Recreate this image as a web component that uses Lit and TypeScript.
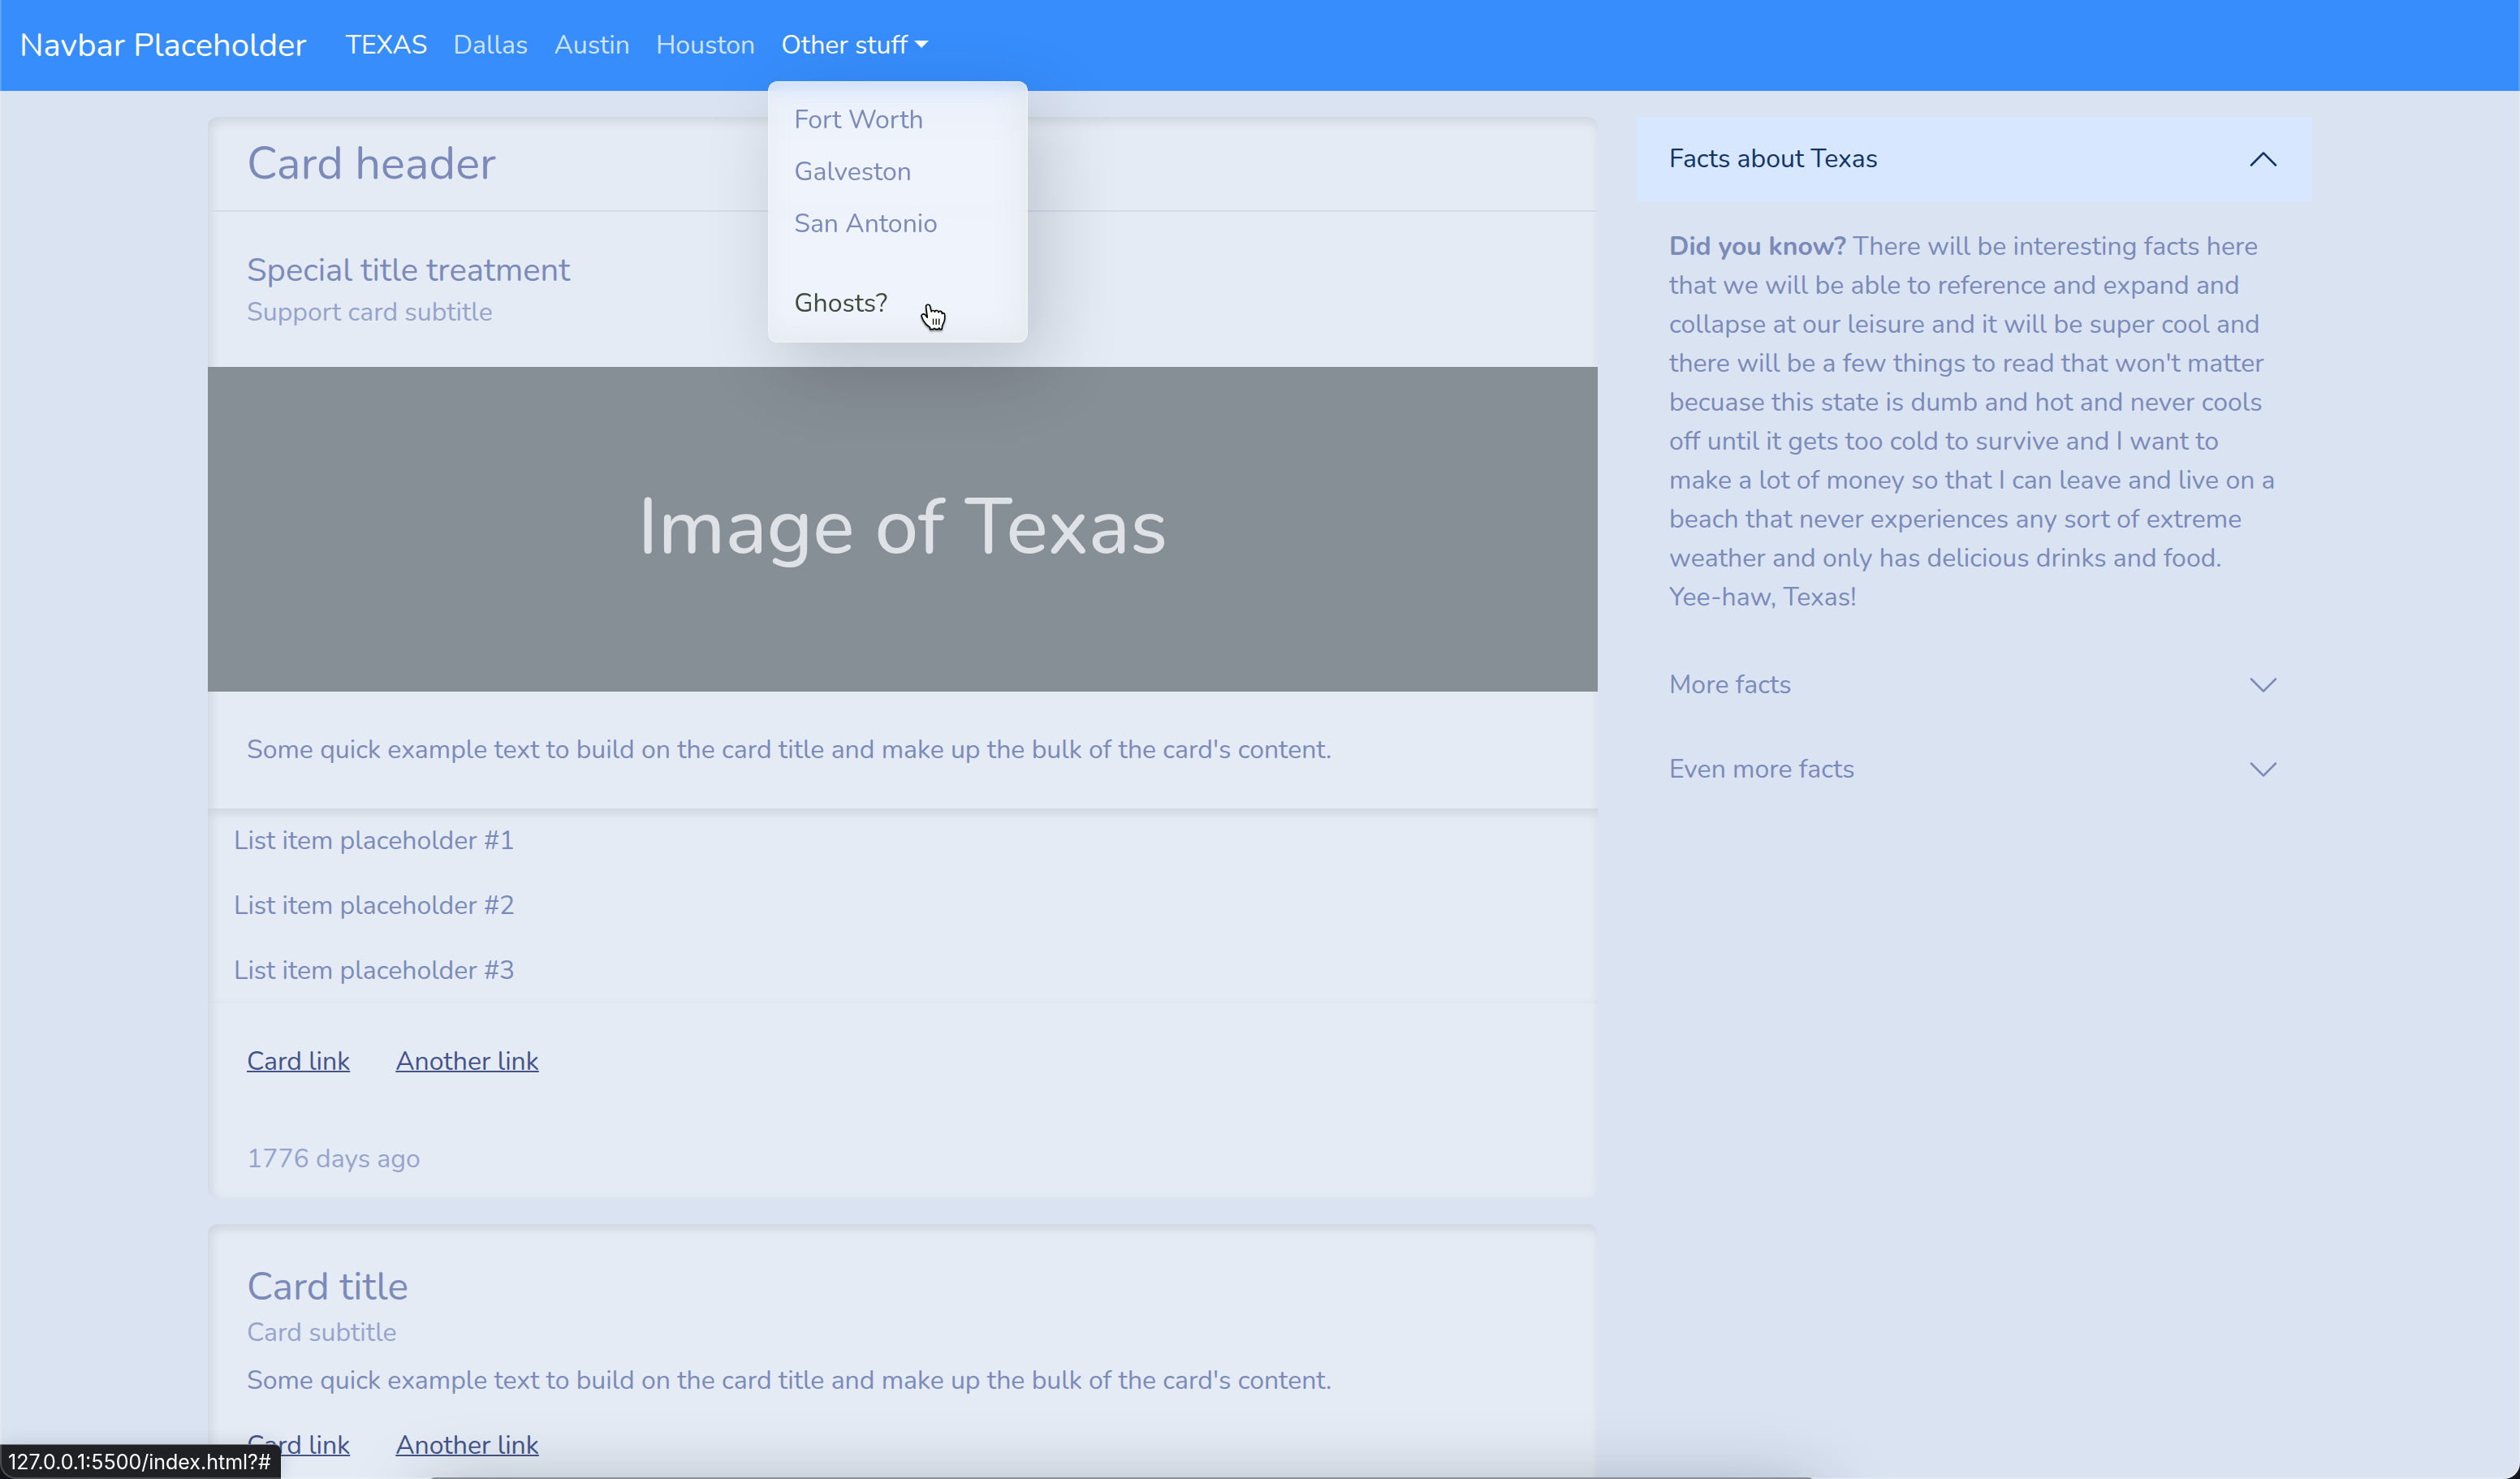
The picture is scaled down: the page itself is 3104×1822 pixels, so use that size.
import { LitElement, html, svg, css } from "lit";
import { customElement, state } from "lit/decorators.js";
import { classMap } from "lit/directives/class-map.js";

const EXAMPLE =
  "Some quick example text to build on the card title and make up the bulk of the card's content.";

@customElement("site-navbar")
export class SiteNavbar extends LitElement {
  static styles = css`
    :host {
      display: block;
      flex: none;
      position: relative;
      z-index: 10;
    }
    .bar {
      display: flex;
      align-items: center;
      gap: 32px;
      padding: 16px 24px;
      background: #378dfc;
    }
    .brand {
      color: #fff;
      font-size: 40px;
      line-height: 60px;
      text-decoration: none;
      white-space: nowrap;
    }
    .links {
      display: flex;
      margin: 0;
      padding: 0;
      list-style: none;
    }
    .item {
      position: relative;
    }
    .link {
      display: flex;
      align-items: center;
      gap: 8px;
      padding: 16px;
      border: 0;
      background: none;
      color: #cfe3ff;
      font: inherit;
      line-height: 48px;
      text-decoration: none;
      white-space: nowrap;
      cursor: pointer;
    }
    .strong {
      color: #fff;
    }
    .caret {
      width: 18px;
      height: 9px;
      margin-bottom: 4px;
      fill: currentColor;
    }
    .menu {
      position: absolute;
      top: calc(100% + 4px);
      left: 0;
      box-sizing: border-box;
      min-width: 320px;
      margin: 0;
      padding: 16px 0;
      list-style: none;
      border-radius: 12px;
      background: rgba(239, 244, 252, 0.83);
      backdrop-filter: blur(10px);
      box-shadow:
        18px 32px 96px rgba(0, 0, 0, 0.17),
        inset 0 0 2px 1px rgba(255, 255, 255, 0.4),
        inset -8px -8px 36px rgba(190, 190, 170, 0.18);
    }
    .option {
      display: block;
      padding: 8px 32px;
      color: #7b8ab8;
      line-height: 48px;
      text-decoration: none;
      white-space: nowrap;
    }
    .hovered {
      color: #404a3d;
    }
    .divider {
      height: 2px;
      margin: 16px 0;
    }
    .pointer {
      position: absolute;
      top: 273px;
      left: 187px;
      width: 33px;
      height: 37px;
      filter: drop-shadow(0 2px 1px rgba(0, 0, 0, 0.4));
      pointer-events: none;
    }
  `;

  render() {
    return html`
      <nav class="bar">
        <a class="brand" href="#">Navbar Placeholder</a>
        <ul class="links">
          <li class="item"><a class="link strong" href="#">TEXAS</a></li>
          ${["Dallas", "Austin", "Houston"].map(
            (city) => html`<li class="item"><a class="link" href="#">${city}</a></li>`,
          )}
          <li class="item">
            <button class="link strong" aria-haspopup="true" aria-expanded="true">
              Other stuff
              <svg class="caret" viewBox="0 0 18 9" aria-hidden="true"><path d="M0 0h18L9 9z" /></svg>
            </button>
            <ul class="menu">
              ${["Fort Worth", "Galveston", "San Antonio"].map(
                (city) => html`<li><a class="option" href="#">${city}</a></li>`,
              )}
              <li class="divider" role="separator"></li>
              <li>
                <a class="option hovered" href="#">Ghosts?</a>
                <svg class="pointer" viewBox="158 98 100 110" aria-hidden="true">
                  <path
                    d="M181 146 L178 142 C172 136 162 140 165 149 L171 163 L182 178 L196 189 V196 H208 L212 192 L218 196 H226 L230 191 L233 196 H240 L242 182 C246 172 252 164 251 154 V142 C251 135 244 133 241 138 C241 127 230 125 228 133 C227 124 216 123 214 131 C212 124 203 124 201 130 L197 112 C195 101 181 101 181 112 L186 152 Z"
                    fill="#fff" stroke="#000" stroke-width="5" stroke-linejoin="round" />
                  <path d="M208 156v23M219 156v23M230 156v23" stroke="#000" stroke-width="4" fill="none" />
                </svg>
              </li>
            </ul>
          </li>
        </ul>
      </nav>
    `;
  }
}

@customElement("content-cards")
export class ContentCards extends LitElement {
  static styles = css`
    :host {
      display: flex;
      flex-direction: column;
      gap: 32px;
      min-width: 0;
    }
    .card {
      border-radius: 12px;
      background: #e4ebf5;
      box-shadow: inset 3px 5px 14px rgba(0, 0, 0, 0.1);
    }
    .header {
      padding: 24px 48px;
      border-bottom: 2px solid #d2dceb;
    }
    .body {
      padding: 48px;
    }
    .footer {
      padding: 24px 48px;
      color: #96a4cb;
      line-height: 48px;
    }
    h2,
    h3,
    h4,
    p {
      width: fit-content;
      margin: 0;
      font-weight: 400;
    }
    .headline {
      font-size: 56px;
      line-height: 67px;
    }
    .special {
      margin-bottom: 8px;
      font-size: 40px;
      line-height: 48px;
    }
    .title {
      margin-bottom: 8px;
      font-size: 48px;
      line-height: 58px;
    }
    .subtitle {
      color: #96a4cb;
      font-size: 32px;
      line-height: 39px;
    }
    .text {
      line-height: 48px;
    }
    .stacked {
      margin: 16px 0 32px;
    }
    .picture {
      display: flex;
      align-items: center;
      justify-content: center;
      box-sizing: border-box;
      height: 400px;
      padding-bottom: 4px;
      background: #868e96;
      color: #dee2e6;
      font-size: 96px;
      font-weight: 500;
    }
    .list {
      margin: 0;
      padding: 0;
      list-style: none;
      background: #e4ebf5;
      box-shadow: inset 3px 5px 14px rgba(0, 0, 0, 0.1);
    }
    .entry {
      padding: 16px 32px;
      line-height: 48px;
    }
    .actions {
      display: flex;
      gap: 56px;
    }
    .action {
      color: #445388;
      line-height: 48px;
      text-decoration-thickness: 2px;
    }
  `;

  private links() {
    return html`<div class="actions">
      <a class="action" href="#">Card link</a>
      <a class="action" href="#">Another link</a>
    </div>`;
  }

  render() {
    return html`
      <article class="card">
        <div class="header"><h2 class="headline">Card header</h2></div>
        <div class="body">
          <h3 class="special">Special title treatment</h3>
          <h4 class="subtitle">Support card subtitle</h4>
        </div>
        <div class="picture">Image of Texas</div>
        <div class="body"><p class="text">${EXAMPLE}</p></div>
        <ul class="list">
          ${[1, 2, 3].map((n) => html`<li class="entry">List item placeholder #${n}</li>`)}
        </ul>
        <div class="body">${this.links()}</div>
        <div class="footer">1776 days ago</div>
      </article>
      <article class="card">
        <div class="body">
          <h2 class="title">Card title</h2>
          <h4 class="subtitle">Card subtitle</h4>
          <p class="text stacked">${EXAMPLE}</p>
          ${this.links()}
        </div>
      </article>
    `;
  }
}

@customElement("fact-accordion")
export class FactAccordion extends LitElement {
  static styles = css`
    :host {
      display: block;
      min-width: 0;
    }
    .heading {
      margin: 0;
      font-size: 32px;
      font-weight: 400;
    }
    .toggle {
      display: flex;
      align-items: center;
      justify-content: space-between;
      box-sizing: border-box;
      width: 100%;
      padding: 32px 40px;
      border: 0;
      background: none;
      color: #7b8ab8;
      font: inherit;
      line-height: 40px;
      text-align: left;
      cursor: pointer;
    }
    .open {
      background: #d7e7ff;
      color: #123366;
    }
    .chevron {
      width: 40px;
      height: 40px;
      fill: currentColor;
    }
    .open .chevron {
      transform: rotate(180deg);
    }
    .panel {
      padding: 32px 40px;
      line-height: 48px;
    }
  `;

  @state() private active = 0;

  private facts = [
    {
      title: "Facts about Texas",
      body: html`<strong>Did you know?</strong> There will be interesting facts here that we will be
        able to reference and expand and collapse at our leisure and it will be super cool and there
        will be a few things to read that won't matter becuase this state is dumb and hot and never
        cools off until it gets too cold to survive and I want to make a lot of money so that I can
        leave and live on a beach that never experiences any sort of extreme weather and only has
        delicious drinks and food. Yee-haw, Texas!`,
    },
    { title: "More facts", body: html`` },
    { title: "Even more facts", body: html`` },
  ];

  private toggle(index: number) {
    this.active = this.active === index ? -1 : index;
  }

  render() {
    const arrow = svg`<path fill-rule="evenodd" d="M1.646 4.646a.5.5 0 0 1 .708 0L8 10.293l5.646-5.647a.5.5 0 0 1 .708.708l-6 6a.5.5 0 0 1-.708 0l-6-6a.5.5 0 0 1 0-.708z"/>`;
    return this.facts.map(
      (fact, i) => html`
        <h2 class="heading">
          <button
            class=${classMap({ toggle: true, open: i === this.active })}
            aria-expanded=${i === this.active ? "true" : "false"}
            @click=${() => this.toggle(i)}
          >
            ${fact.title}
            <svg class="chevron" viewBox="0 0 16 16" aria-hidden="true">${arrow}</svg>
          </button>
        </h2>
        ${i === this.active ? html`<div class="panel">${fact.body}</div>` : ""}
      `,
    );
  }
}

@customElement("app-root")
export class AppRoot extends LitElement {
  static styles = css`
    :host {
      display: flex;
      flex-direction: column;
      height: 100vh;
      overflow: hidden;
      background: #dae3f2;
      color: #7b8ab8;
      font-family: Nunito, "Noto Sans", sans-serif;
      font-size: 32px;
      line-height: 48px;
    }
    .page {
      flex: 1;
      min-height: 0;
      overflow-y: auto;
      scrollbar-width: none;
    }
    .columns {
      display: grid;
      grid-template-columns: 2fr 1fr;
      align-items: start;
      max-width: 2640px;
      margin: 0 auto;
      padding: 32px 0;
    }
    .column {
      min-width: 0;
      padding: 0 24px;
    }
    .behind {
      position: fixed;
      z-index: 20;
      top: calc(100% - 2px);
      left: 17%;
      right: 28%;
      height: 200px;
      border-radius: 8px;
      background: #6d727b;
      box-shadow: 0 20px 90px rgba(20, 35, 40, 0.35);
      pointer-events: none;
    }
    .status {
      position: fixed;
      z-index: 30;
      left: 0;
      bottom: 0;
      padding: 1px 12px 1px 10px;
      border-top: 1px solid #7d828b;
      border-radius: 0 8px 0 0;
      background: #202124;
      box-shadow: 0 0 24px rgba(0, 0, 0, 0.12);
      color: #fff;
      font-family: Inter, sans-serif;
      font-size: 25px;
      line-height: 40px;
    }
    .frame {
      position: fixed;
      z-index: 40;
      inset: 0;
      border: solid rgba(255, 255, 255, 0.2);
      border-width: 0 2px 2px;
      border-radius: 0 0 20px 20px;
      box-shadow: 0 0 0 20px #14151b;
      pointer-events: none;
    }
  `;

  render() {
    return html`
      <site-navbar></site-navbar>
      <main class="page">
        <div class="columns">
          <div class="column"><content-cards></content-cards></div>
          <aside class="column"><fact-accordion></fact-accordion></aside>
        </div>
      </main>
      <div class="behind"></div>
      <div class="status">127.0.0.1:5500/index.html?#</div>
      <div class="frame"></div>
    `;
  }
}
